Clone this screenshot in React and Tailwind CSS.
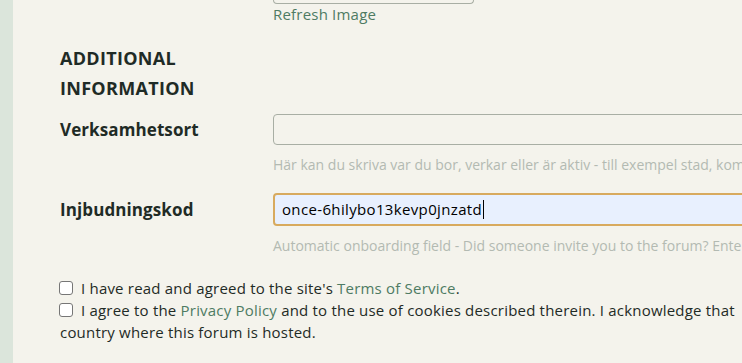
import React from "react";

export default function App() {
  return (
    <div className="flex min-h-[363px] w-[742px] overflow-hidden bg-[#f4f3ec] font-['Open_Sans',sans-serif] text-[#1f2b26]">
      {/* left rail */}
      <div className="w-[13px] shrink-0 bg-[#dbe5db]" />

      <div className="min-w-0 flex-1 overflow-hidden pl-[47px]">
        {/* captcha tail */}
        <div className="flex">
          <div className="w-[213px] shrink-0" />
          <div>
            <div className="h-[4px] w-[201px] rounded-b-[4px] border border-t-0 border-[#a8aea4]" />
            <a className="block pt-[1px] text-[15px] leading-[18px] tracking-[0.2px] text-[#4e7b63]">Refresh Image</a>
          </div>
        </div>

        {/* heading */}
        <h2 className="mt-[20px] text-[18px] font-bold leading-[30px] tracking-[0.3px]">
          ADDITIONAL
          <br />
          INFORMATION
        </h2>

        {/* Verksamhetsort */}
        <div className="mt-[11px] flex items-center">
          <label className="w-[213px] shrink-0 text-[17px] font-bold tracking-[0.1px]">Verksamhetsort</label>
          <input
            className="h-[31px] w-[600px] shrink-0 rounded-[4px] border border-[#a8aea4] bg-transparent px-2 outline-none"
            defaultValue=""
          />
        </div>
        <div className="flex">
          <div className="w-[213px] shrink-0" />
          <p className="mt-[11px] whitespace-nowrap text-[14px] leading-[18px] text-[#b3bab2]">
            Här kan du skriva var du bor, verkar eller är aktiv - till exempel stad, kommun
          </p>
        </div>

        {/* Injbudningskod */}
        <div className="mt-[19px] flex items-center">
          <label className="w-[213px] shrink-0 text-[17px] font-bold tracking-[0.1px]">Injbudningskod</label>
          <div className="flex h-[33px] w-[600px] shrink-0 items-center rounded-[4px] border-2 border-[#d8aa5e] bg-[#e8f0fe] px-[7px] text-[15px] tracking-[0.35px] text-black">
            once-6hilybo13kevp0jnzatd
            <span className="ml-[1px] h-[19px] w-px bg-black" />
          </div>
        </div>
        <div className="flex">
          <div className="w-[213px] shrink-0" />
          <p className="mt-[11px] whitespace-nowrap text-[14px] leading-[18px] text-[#b3bab2]">
            Automatic onboarding field - Did someone invite you to the forum? Enter
          </p>
        </div>

        {/* agreements */}
        <div className="mt-[22px] text-[15px] leading-[22px] tracking-[0.2px]">
          <div className="flex items-center whitespace-nowrap">
            <span className="ml-[-1px] mr-[8px] inline-block h-[14px] w-[14px] shrink-0 rounded-[3px] border border-[#767676] bg-white" />
            I have read and agreed to the site's&nbsp;
            <a className="text-[#4e7b63]">Terms of Service</a>.
          </div>
          <div className="flex items-center whitespace-nowrap">
            <span className="ml-[-1px] mr-[8px] inline-block h-[14px] w-[14px] shrink-0 rounded-[3px] border border-[#767676] bg-white" />
            I agree to the&nbsp;<a className="text-[#4e7b63]">Privacy Policy</a>&nbsp;and to the use of cookies described therein. I acknowledge that
          </div>
          <div>country where this forum is hosted.</div>
        </div>
      </div>
    </div>
  );
}
